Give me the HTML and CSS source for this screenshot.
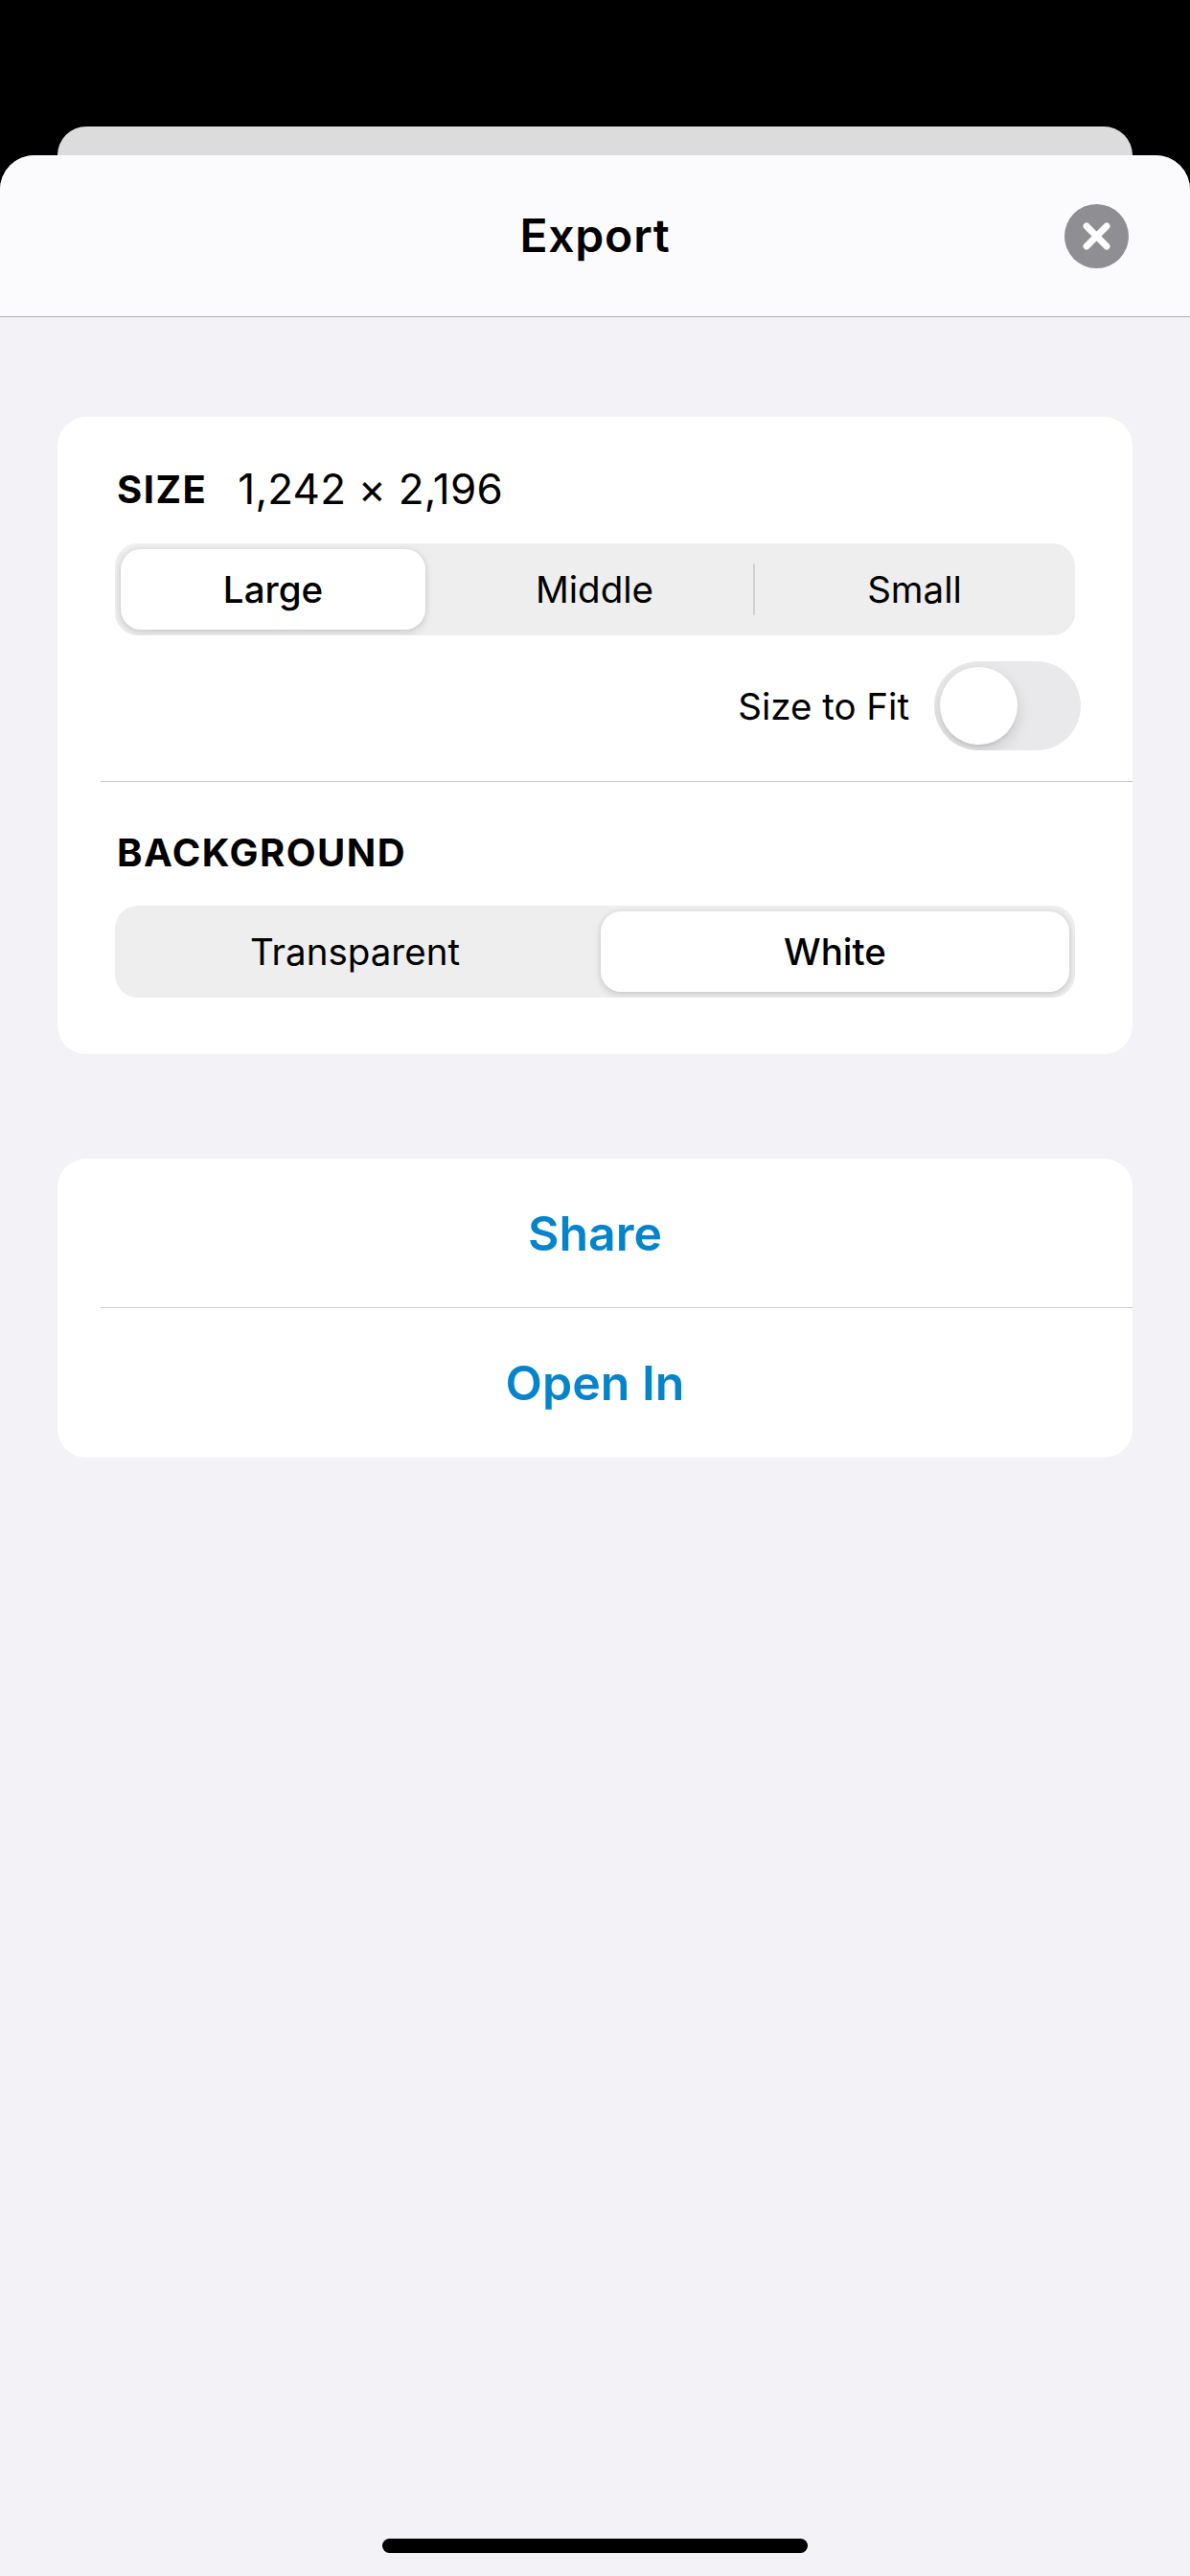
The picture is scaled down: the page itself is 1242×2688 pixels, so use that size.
FILE: index.html
```html
<!DOCTYPE html>
<html lang="en">
<head>
    <meta charset="UTF-8">
    <meta name="viewport" content="width=device-width, initial-scale=1.0">
    <title>Export</title>
    <link rel="stylesheet" href="styles.css">
</head>
<body>
    <div class="back-card"></div>

    <div class="sheet">
        <header class="sheet-header">
            <h1 class="sheet-title">Export</h1>
            <button class="close-button" aria-label="Close">
                <svg class="close-icon" viewBox="0 0 67 67">
                    <path d="M23 23 L44 44 M44 23 L23 44"></path>
                </svg>
            </button>
        </header>

        <main class="sheet-body">
            <section class="card">
                <div class="card-section size-section">
                    <div class="section-label">
                        <span class="label-title">SIZE</span>
                        <span class="label-value">1,242 × 2,196</span>
                    </div>
                    <div class="segmented segmented-three">
                        <div class="segment segment-large selected">Large</div>
                        <div class="segment">Middle</div>
                        <div class="segment segment-divided">Small</div>
                    </div>
                    <div class="fit-row">
                        <span class="fit-label">Size to Fit</span>
                        <div class="toggle"><div class="toggle-knob"></div></div>
                    </div>
                </div>
                <div class="card-section background-section">
                    <div class="section-label">
                        <span class="label-title">BACKGROUND</span>
                    </div>
                    <div class="segmented segmented-two">
                        <div class="segment">Transparent</div>
                        <div class="segment selected">White</div>
                    </div>
                </div>
            </section>

            <section class="card action-card">
                <div class="action-row">Share</div>
                <div class="action-row">Open In</div>
            </section>
        </main>

        <div class="home-bar"></div>
    </div>
</body>
</html>
```

FILE: styles.css
```css
* {
    box-sizing: border-box;
    margin: 0;
    padding: 0;
}

body {
    display: flex;
    flex-direction: column;
    height: 2688px;
    background: #000;
    font-family: Inter, "Liberation Sans", sans-serif;
    color: #000;
    overflow: hidden;
}

.back-card {
    height: 30px;
    margin: 132px 60px 0;
    background: #dcdcdc;
    border-radius: 30px 30px 0 0;
}

.sheet {
    flex: 1;
    display: flex;
    flex-direction: column;
    background: #f2f2f7;
    border-radius: 36px 36px 0 0;
    overflow: hidden;
}

.sheet-header {
    display: grid;
    grid-template-columns: 1fr auto 1fr;
    align-items: center;
    height: 169px;
    padding-right: 64px;
    padding-left: 64px;
    background: #fbfbfd;
    border-bottom: 1px solid #b2b2b7;
}

.sheet-title {
    grid-column: 2;
    font-size: 48px;
    font-weight: 600;
    line-height: 60px;
    letter-spacing: 0.8px;
}

.close-button {
    grid-column: 3;
    justify-self: end;
    width: 67px;
    height: 67px;
    border: none;
    border-radius: 50%;
    background: #8e8e93;
}

.close-icon {
    display: block;
    width: 67px;
    height: 67px;
    fill: none;
    stroke: #fff;
    stroke-width: 7;
    stroke-linecap: round;
}

.sheet-body {
    display: flex;
    flex-direction: column;
    gap: 109px;
    padding: 104px 60px 0;
}

.card {
    background: #fff;
    border-radius: 30px;
    overflow: hidden;
}

.card-section {
    padding: 0 60px;
}

.size-section {
    padding-top: 50px;
    padding-bottom: 32px;
}

/* hairline starts inset from the card edge */
.background-section,
.action-row + .action-row {
    box-shadow: 45px -1px 0 0 #c9c9cb;
}

.background-section {
    margin-top: 1px;
    padding-top: 48px;
    padding-bottom: 59px;
}

.section-label {
    display: flex;
    align-items: center;
    gap: 32px;
    height: 50px;
    margin-bottom: 32px;
}

.background-section .section-label {
    margin-bottom: 31px;
}

.label-title {
    font-size: 40px;
    font-weight: 700;
    letter-spacing: 1.5px;
    padding-left: 2px;
}

.label-value {
    font-size: 44px;
    font-weight: 400;
    letter-spacing: 0.2px;
}

.segmented {
    display: grid;
    height: 96px;
    background: #eeeeee;
    border-radius: 24px;
    overflow: hidden;
    font-size: 38.5px;
}

.segmented-three {
    grid-template-columns: 334px 333px 335px;
}

.segmented-two {
    grid-template-columns: 1fr 1fr;
}

.segment {
    display: flex;
    align-items: center;
    justify-content: center;
    position: relative;
}

.segment.selected {
    margin: 6px;
    background: #fff;
    border-radius: 21px;
    font-weight: 500;
    box-shadow: 0 3px 8px rgba(0, 0, 0, 0.13), 0 0 5px rgba(0, 0, 0, 0.07);
}

.segment-large {
    margin-right: 10px !important;
}

.segment-divided::before {
    content: "";
    position: absolute;
    left: -1px;
    top: 21px;
    bottom: 21px;
    width: 2px;
    border-radius: 1px;
    background: #d1d1d3;
}

.fit-row {
    display: flex;
    align-items: center;
    justify-content: flex-end;
    gap: 26px;
    margin-top: 27px;
    margin-right: -6px;
}

.fit-label {
    font-size: 38.5px;
}

.toggle {
    width: 153px;
    height: 93px;
    padding: 6px;
    background: #e9e9eb;
    border-radius: 47px;
    overflow: hidden;
}

.toggle-knob {
    width: 81px;
    height: 81px;
    border-radius: 50%;
    background: #fff;
    box-shadow: 0 6px 16px rgba(0, 0, 0, 0.14), 0 3px 1px rgba(0, 0, 0, 0.05);
}

.action-card {
    display: flex;
    flex-direction: column;
}

.action-row {
    display: flex;
    align-items: center;
    justify-content: center;
    height: 155px;
    color: #0584cc;
    font-size: 50px;
    font-weight: 600;
}

.action-row + .action-row {
    height: 156px;
    margin-top: 1px;
}

.home-bar {
    width: 444px;
    height: 15px;
    margin: auto auto 24px;
    background: #000;
    border-radius: 8px;
}
```
